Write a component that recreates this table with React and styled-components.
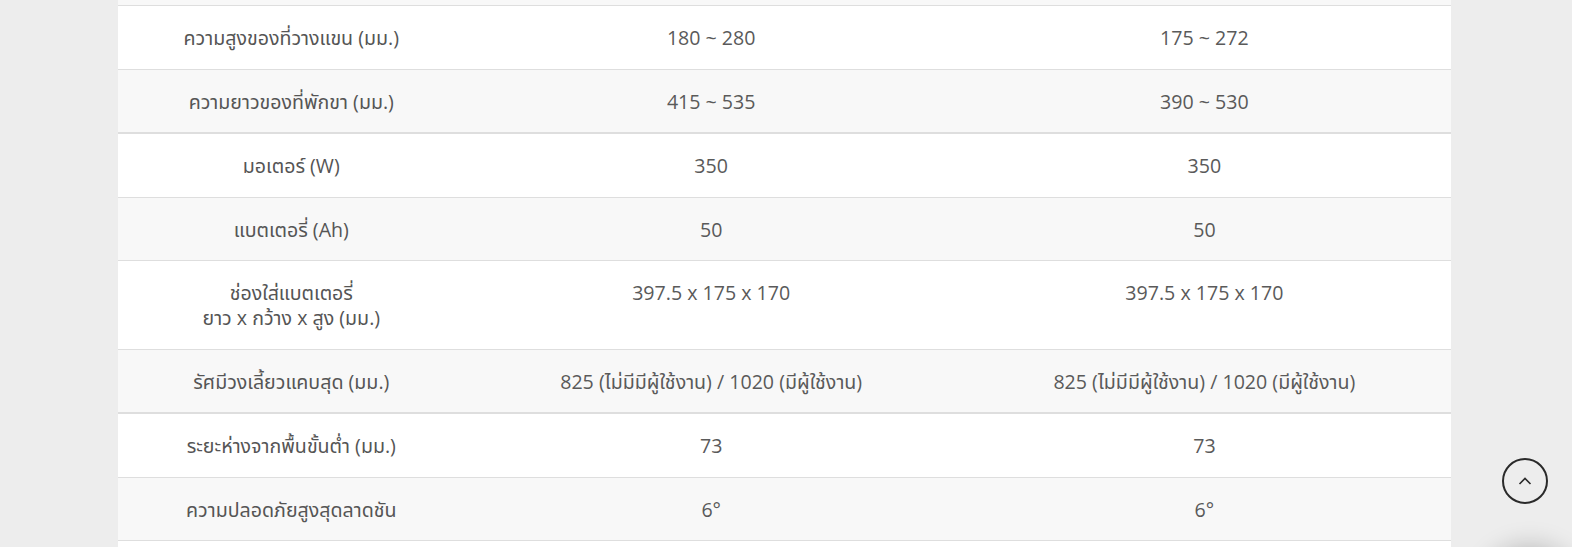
import React from "react";
import styled, { createGlobalStyle } from "styled-components";

const Global = createGlobalStyle`
  html, body { margin: 0; padding: 0; }
  body {
    background: #ededed;
    font-family: "Open Sans", "Noto Sans Thai", "Noto Sans", "DejaVu Sans", sans-serif;
    color: #555;
    overflow: hidden;
    height: 547px;
  }
`;

const Page = styled.div`
  width: 1572px;
  height: 547px;
  overflow: hidden;
  position: relative;
`;

const Table = styled.div`
  width: 1333px;
  margin-left: 118px;
  display: flex;
  flex-direction: column;
`;

const RowTail = styled.div`
  height: 5px;
  background: #f8f8f8;
  border-bottom: 1px solid #dedede;
`;

const Row = styled.div`
  display: grid;
  grid-template-columns: 26fr 37fr 37fr;
  background: ${(p) => (p.$alt ? "#f8f8f8" : "#ffffff")};
  border-bottom: ${(p) => (p.$groupEnd ? "2px" : "1px")} solid #dedede;
`;

const Cell = styled.div`
  padding: 19px 10px 18.5px;
  font-size: 19.6px;
  line-height: 25px;
  text-align: center;
  color: #5a5a5a;
`;

const Label = styled(Cell)`
  color: #555;
`;

const ScrollTop = styled.button`
  position: absolute;
  left: 1502px;
  top: 458px;
  width: 46px;
  height: 46px;
  border-radius: 50%;
  border: 2px solid #2a2a2a;
  background: transparent;
  display: flex;
  align-items: center;
  justify-content: center;
  padding: 0;
  cursor: pointer;
`;

const Glow = styled.div`
  position: absolute;
  left: 1490px;
  top: 556px;
  width: 80px;
  height: 80px;
  border-radius: 50%;
  background: #e4e4e4;
  box-shadow: 0 0 26px 10px rgba(0, 0, 0, 0.22);
`;

const rows = [
  { label: ["ความสูงของที่วางแขน (มม.)"], a: "180 ~ 280", b: "175 ~ 272" },
  { label: ["ความยาวของที่พักขา (มม.)"], a: "415 ~ 535", b: "390 ~ 530", groupEnd: true },
  { label: ["มอเตอร์ (W)"], a: "350", b: "350" },
  { label: ["แบตเตอรี่ (Ah)"], a: "50", b: "50" },
  { label: ["ช่องใส่แบตเตอรี่", "ยาว x กว้าง x สูง (มม.)"], a: "397.5 x 175 x 170", b: "397.5 x 175 x 170" },
  {
    label: ["รัศมีวงเลี้ยวแคบสุด (มม.)"],
    a: "825 (ไม่มีมีผู้ใช้งาน) / 1020 (มีผู้ใช้งาน)",
    b: "825 (ไม่มีมีผู้ใช้งาน) / 1020 (มีผู้ใช้งาน)",
    groupEnd: true,
  },
  { label: ["ระยะห่างจากพื้นขั้นต่ำ (มม.)"], a: "73", b: "73" },
  { label: ["ความปลอดภัยสูงสุดลาดชัน"], a: "6°", b: "6°" },
  { label: [""], a: "", b: "" },
];

export default function App() {
  return (
    <Page>
      <Global />
      <Table>
        <RowTail />
        {rows.map((r, i) => (
          <Row key={i} $alt={i % 2 === 1} $groupEnd={r.groupEnd}>
            <Label>
              {r.label.map((l, j) => (
                <div key={j}>{l || "\u00a0"}</div>
              ))}
            </Label>
            <Cell>{r.a}</Cell>
            <Cell>{r.b}</Cell>
          </Row>
        ))}
      </Table>
      <Glow />
      <ScrollTop aria-label="Scroll to top">
        <svg width="16" height="10" viewBox="0 0 16 10" fill="none">
          <path d="M2.5 8 L8 2.5 L13.5 8" stroke="#2a2a2a" strokeWidth="1.6" />
        </svg>
      </ScrollTop>
    </Page>
  );
}
